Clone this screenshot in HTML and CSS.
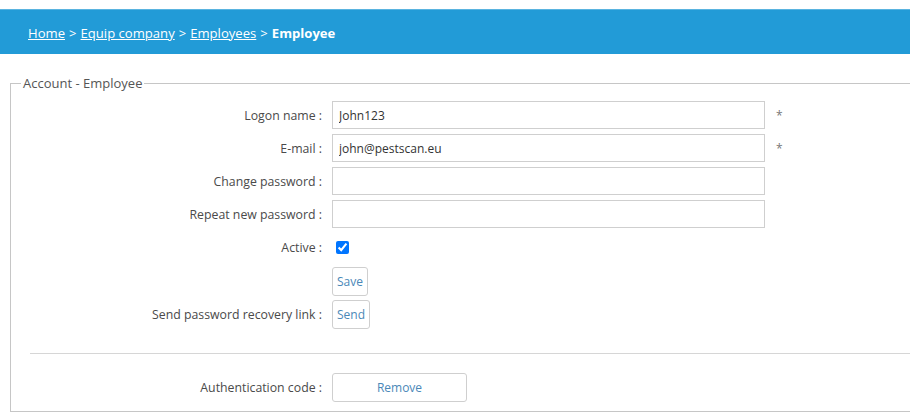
FILE: index.html
```html
<!DOCTYPE html>
<html>
<head>
<meta charset="utf-8">
<link rel="stylesheet" href="styles.css">
</head>
<body>
<div class="topline"></div>
<header class="crumbs">
  <a href="#">Home</a><span class="sep">&gt;</span><a href="#">Equip company</a><span class="sep">&gt;</span><a href="#">Employees</a><span class="sep">&gt;</span><strong>Employee</strong>
</header>
<fieldset class="account">
  <legend>Account - Employee</legend>
  <div class="form">
    <label class="lbl">Logon name :</label>
    <input class="txt" type="text" value="John123">
    <span class="req">*</span>

    <label class="lbl">E-mail :</label>
    <input class="txt" type="text" value="john@pestscan.eu">
    <span class="req">*</span>

    <label class="lbl">Change password :</label>
    <input class="txt" type="password">
    <span></span>

    <label class="lbl">Repeat new password :</label>
    <input class="txt" type="password">
    <span></span>

    <label class="lbl">Active :</label>
    <div class="cell act"><input class="chk" type="checkbox" checked></div>
    <span></span>

    <span></span>
    <div class="cell"><button class="btn">Save</button></div>
    <span></span>

    <label class="lbl">Send password recovery link :</label>
    <div class="cell"><button class="btn">Send</button></div>
    <span></span>
  </div>
  <hr class="divider">
  <div class="form">
    <label class="lbl">Authentication code :</label>
    <div class="cell"><button class="btn wide">Remove</button></div>
    <span></span>
  </div>
</fieldset>
</body>
</html>
```
FILE: styles.css
```css
html, body {
  margin: 0;
  padding: 0;
  background: #ffffff;
  overflow: hidden;
  font-family: "Open Sans", "Liberation Sans", sans-serif;
  font-size: 12px;
  color: #4a4a4a;
}

.topline {
  height: 9px;
}

.crumbs {
  height: 45px;
  background: #229bd7;
  border-top: 1px solid #5ab4e0;
  box-sizing: border-box;
  display: flex;
  align-items: center;
  padding-left: 28px;
  padding-top: 1px;
  font-size: 13.1px;
  color: #ffffff;
}

.crumbs a {
  color: #ffffff;
  text-decoration: underline;
}

.crumbs .sep {
  margin: 0 4px;
}

.crumbs strong {
  font-weight: 700;
}

.account {
  margin: 20px 0 0 10px;
  width: 940px;
  box-sizing: border-box;
  border: 1px solid #c6c6c6;
  padding: 9px 0 10px 11px;
}

.account legend {
  font-size: 13px;
  color: #555;
  padding: 0 2px;
  margin-left: -1px;
}

.form {
  display: grid;
  grid-template-columns: 300px 433px 40px;
  column-gap: 10px;
  row-gap: 5px;
  align-items: center;
}

.lbl {
  text-align: right;
  color: #4a4a4a;
  font-size: 12.3px;
}

.txt {
  height: 28px;
  box-sizing: border-box;
  border: 1px solid #cfcfcf;
  padding: 0 6px;
  font-family: "Open Sans", "Liberation Sans", sans-serif;
  font-size: 12px;
  color: #333;
  margin: 0;
}

.req {
  color: #777;
  font-size: 12px;
  padding-left: 1px;
}

.cell {
  display: flex;
  align-items: center;
  height: 28px;
}

.cell.act {
  height: 29px;
}

.chk {
  margin: 0 0 0 4px;
  width: 13px;
  height: 13px;
}

.btn {
  height: 29px;
  box-sizing: border-box;
  background: #ffffff;
  border: 1px solid #cfcfcf;
  border-radius: 3px;
  padding: 0 4px;
  font-family: "Open Sans", "Liberation Sans", sans-serif;
  font-size: 12px;
  color: #4a88b8;
  margin: 0;
}

.btn.wide {
  width: 135px;
}

.divider {
  border: 0;
  border-top: 1px solid #d6d6d6;
  margin: 25px 0 19px 8px;
  height: 0;
}
```
